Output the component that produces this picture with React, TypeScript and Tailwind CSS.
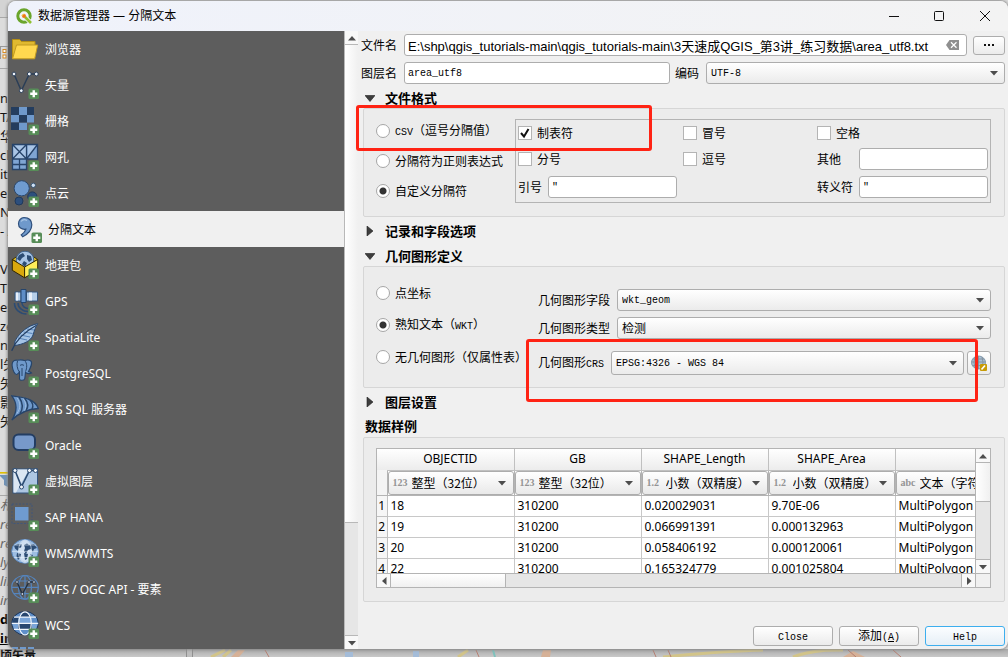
import type { ReactNode } from "react";
import clsx from "clsx";

const CJK = "font-['Noto_Sans','Noto_Sans_CJK_SC',sans-serif]";
const FORM = "font-['Noto_Sans_CJK_SC',sans-serif]";
const MONO = "font-['Liberation_Mono','Noto_Sans_CJK_SC',monospace] text-[10px]";

function Plus() {
  return (
    <g>
      <rect x="17.5" y="17.5" width="10.5" height="10.5" rx="1.5" fill="#578d58" />
      <path d="M22.75 19.3v7M19.2 22.75h7.1" stroke="#fff" strokeWidth="2.4" />
    </g>
  );
}

const folderIcon = (
  <>
    <path d="M1.5 23.5V4.5h7l2 2h13.5v4" fill="#e0b930" stroke="#b58f16" />
    <path d="M1.5 23.8L5.5 10h21.2l-3 13.8z" fill="#ffd84f" stroke="#c29a20" />
  </>
);

const vectorIcon = (
  <>
    <path d="M3 3l7.3 16.7L18.3 3h7" fill="none" stroke="#2b3e57" strokeWidth="1.5" />
    {[[3, 3], [10.3, 19.7], [18.3, 3], [25.3, 3]].map(([x, y]) => (
      <circle key={x} cx={x} cy={y} r="1.9" fill="#eef3fa" stroke="#2b3e57" />
    ))}
    <Plus />
  </>
);

const rasterIcon = (
  <>
    <path d="M8 0h8v8H8zM0 8h8v7.5H0zM16 8h7v7.5h-7zM8 15.5h8V23H8z" fill="#6f99cb" />
    <path d="M0 0h8v8H0zM16 0h7v8h-7zM8 8h8v7.5H8zM0 15.5h8V23H0z" fill="#243d5e" />
    <Plus />
  </>
);

const meshIcon = (
  <>
    <path d="M1.5 1.5h25v14.5H15.5v10.5h-14z" fill="#7fa5d3" />
    <path d="M1.5 1.5h14V16h-14z" fill="#a9c5e6" />
    <path d="M17 14L25.5 3v-1h-9z" fill="#a9c5e6" />
    <path
      d="M1.5 1.5h25v14.5h-25zM15.5 1.5v25h-14v-25M1.5 1.5l14 14.5M15.5 1.5L1.5 16M15.5 16l11-14.5M8.5 16v10.5M1.5 21.5h14"
      fill="none"
      stroke="#27446a"
      strokeWidth="1.3"
    />
    <Plus />
  </>
);

const cloudIcon = (
  <>
    <circle cx="10.7" cy="9.3" r="7.6" fill="#6f9bd0" stroke="#2b486e" />
    <circle cx="22.3" cy="6.3" r="2.2" fill="#cfe0f3" stroke="#35526f" />
    <circle cx="8" cy="22" r="4" fill="#2d4f7d" stroke="#20395c" />
    <circle cx="21.3" cy="17.5" r="4.6" fill="#2d4f7d" stroke="#20395c" />
    <Plus />
  </>
);

const commaIcon = (
  <>
    <path
      d="M10 2.5c5 0 7.8 3 7.8 7.3 0 5.2-4 9.4-9.1 12l-1.5-1.9c2.7-2 4.3-4 4.7-5.7-4.4.5-7.4-1.6-7.4-5.5 0-3.5 2.5-6.2 5.5-6.2z"
      fill="#6f99cb"
      stroke="#2f4f7c"
      strokeWidth="1.2"
    />
    <path d="M7 6.5c1.5-2 4-2.3 6-1" stroke="#a9c5e6" strokeWidth="1.2" fill="none" />
    <Plus />
  </>
);

const packageIcon = (
  <>
    <path d="M1.3 8.5L6 5.5h16l4.7 3-12.5 7z" fill="#e5c32a" stroke="#453500" />
    <circle cx="14" cy="9" r="8.8" fill="#a9c5e6" stroke="#41658f" />
    <path d="M8 4l4-2 2 3-3 2-2 3-3-2zM16 4l4 1 1 4-3 2-2-3zM13 10l3 2-2 4-3-3z" fill="#2c4c74" />
    <path d="M1.3 8.5l12.3 7.5v10.8L1.3 19.3z" fill="#d9a80d" stroke="#332700" />
    <path d="M13.6 16l13.1-7.5v10.8l-13.1 7.5z" fill="#ffee58" stroke="#332700" />
    <Plus />
  </>
);

const gpsIcon = (
  <>
    <path d="M4 5h6v9H4zM15.5 5h11v9h-11z" fill="#b6cfea" stroke="#34567f" />
    <path d="M5 5.5h2v8H5zM18 5.5h3v8h-3z" fill="#e8f0fa" />
    <path d="M10 2.5h5v13h-5z" fill="#5e8dc6" stroke="#24446c" />
    <path
      d="M11 16c0 3 3 5.5 6 5.5M7 16c0 5 5 8.5 10 8.5M3.5 16c0 7 6 11 12 11"
      fill="none"
      stroke="#2c4c74"
      strokeWidth="1.6"
    />
    <Plus />
  </>
);

const featherIcon = (
  <>
    <path d="M26.7.7C17 2.5 9 9 4 18l-.5 4.5C12 21.5 20 18 22 12c1.5-5 2.5-8 4.7-11.3z" fill="#a5c4e6" stroke="#294a74" />
    <path d="M7 15l9 2M9.5 12l9.5 2M12.5 9l9 1.5M16 6l7 1" stroke="#5582b8" />
    <path d="M25 2.5C15 8 5 17 .7 27.7" fill="none" stroke="#243f63" strokeWidth="1.4" />
    <Plus />
  </>
);

const elephantIcon = (
  <>
    <path
      d="M6 1.2C2 .8.8 3.5 1.2 7c.5 4 2.3 8.5 4.3 8.5 1.2 0 2-1.5 3-2.5v7c0 1.8 5 1.8 5.3-.5l.7-6c2.5 1.5 5 1 6 .5-1-1-2-1-3-1.5C19.5 9 21.5 3.5 19.8 2 18 .5 15.5 1 13.5 1.500 11 .5 9 .8 6 1.2z"
      fill="#6f99cb"
      stroke="#27456b"
      strokeWidth="1.1"
    />
    <path d="M6.5 2c-1 3-.5 8 2 11M13.5 1.5c3 2.5 2.5 8 1 11M9 6.5c1-1 3-1 4 0M11 9v8" fill="none" stroke="#27456b" />
    <Plus />
  </>
);

const sailIcon = (
  <>
    <path d="M.8.8C10 2 24 3 27.3 13.5 18 14 9 17 .8 25 6 17 7 9 .8.8z" fill="#6f99cb" stroke="#27456b" strokeWidth="1.3" />
    <path d="M8 2c4 6 4 12 1 16.5M13.5 3c4 5 4 9 1.5 12.5M19 5c3 3 3.5 6 2 9" fill="none" stroke="#27456b" strokeWidth="1.5" />
    <path d="M6 2.5c4 6 3.5 11 0 16M12 3.5c3 4 3.5 8 1.5 12" fill="none" stroke="#a0c0e4" />
    <Plus />
  </>
);

const oracleIcon = (
  <>
    <rect x="2.5" y="3.5" width="21.5" height="15.5" rx="5" fill="#7799ca" stroke="#233d62" strokeWidth="2" />
    <Plus />
  </>
);

const virtualIcon = (
  <>
    <rect x="2" y="2" width="24.5" height="24" fill="#adc6e2" stroke="#33547f" />
    <path d="M2.5 2.5H18L5 25.5H2.5z" fill="#dce7f3" />
    <path d="M4 3.5l6.5 16L18.5 3.5h6" fill="none" stroke="#2b4a70" strokeWidth="1.6" />
    {[[4, 3.5], [10.5, 20], [18.5, 3.5], [24.5, 3.5]].map(([x, y]) => (
      <circle key={x} cx={x} cy={y} r="2" fill="#f2f6fb" stroke="#2b4a70" />
    ))}
    <Plus />
  </>
);

const hanaIcon = (
  <>
    <rect x="1" y="1" width="20" height="19.5" fill="none" stroke="#41577a" strokeDasharray="2 1.5" />
    <rect x="4" y="4" width="13.5" height="13.5" fill="#6f9bd0" />
    <Plus />
  </>
);

const wmsIcon = (
  <>
    <ellipse cx="14" cy="12.3" rx="13.3" ry="11.9" fill="#9dbde2" stroke="#5b87bd" />
    <ellipse cx="14" cy="12.3" rx="6" ry="11" fill="#cfdff1" />
    <path
      d="M3 6.500l4-1.500 4 .5-1 3-2 .5-1 3-3-2.500zM13 6l3-1.500 2 1.500 5-1 3 4-3 1-1 3-2-3-3 1-2 4-2-3 1-3zM6 14l4 1-1 4-2 2-1.500-4zM13 14l4 1-1 5-2 1zM3 4l3-1M19 15l3 1-1 2"
      fill="#2c4c74"
    />
    <g fill="none" stroke="#eaf2fa" strokeWidth=".6">
      <ellipse cx="14" cy="12.3" rx="6.500" ry="11.5" />
      <path d="M1 12.3h26M3 6h22M3 18.600h22" />
    </g>
    <Plus />
  </>
);

const wfsIcon = (
  <>
    <g fill="none" stroke="#5584bd" strokeWidth="1.2">
      <ellipse cx="14" cy="12.3" rx="13.3" ry="11.8" />
      <ellipse cx="14" cy="12.3" rx="6.5" ry="11.8" />
      <path d="M14 .5v23.5M.7 12.3h26.6M3 6h22M3 18.6h22" />
    </g>
    <path d="M6 7l5.3 12L18 7h5" fill="none" stroke="#222f40" strokeWidth="1.3" />
    {[[6, 7], [11.3, 19], [18, 7], [23, 7]].map(([x, y]) => (
      <circle key={x} cx={x} cy={y} r="1.3" fill="#e9eff7" stroke="#222f40" strokeWidth=".8" />
    ))}
    <Plus />
  </>
);

const wcsIcon = (
  <>
    <ellipse cx="14" cy="12.3" rx="13.3" ry="11.8" fill="#5f8fc9" stroke="#1f3453" />
    <path d="M8 6C9 3 11 1 14 1s5 2 6 5zM1 12.3h7V18H3zM20 12.3h7L25 18h-5zM1 12h6l1-6H3z" fill="#27466f" />
    <path d="M8 12.3h12V18H8z" fill="#27466f" />
    <path d="M8 6h12v6H8zM1 12.300h6V18H3zM21 12.300h6L25 18h-4z" fill="#7aa5d8" />
    <path d="M3 6.2h22M.8 12.3h26.4M3 18.4h22" stroke="#eef4fb" strokeWidth="1.2" />
    <ellipse cx="14" cy="12.3" rx="6.3" ry="11.5" fill="none" stroke="#eef4fb" strokeWidth="1.2" />
    <Plus />
  </>
);

const sources: { name: string; icon: ReactNode }[] = [
  { name: "浏览器", icon: folderIcon },
  { name: "矢量", icon: vectorIcon },
  { name: "栅格", icon: rasterIcon },
  { name: "网孔", icon: meshIcon },
  { name: "点云", icon: cloudIcon },
  { name: "分隔文本", icon: commaIcon },
  { name: "地理包", icon: packageIcon },
  { name: "GPS", icon: gpsIcon },
  { name: "SpatiaLite", icon: featherIcon },
  { name: "PostgreSQL", icon: elephantIcon },
  { name: "MS SQL 服务器", icon: sailIcon },
  { name: "Oracle", icon: oracleIcon },
  { name: "虚拟图层", icon: virtualIcon },
  { name: "SAP HANA", icon: hanaIcon },
  { name: "WMS/WMTS", icon: wmsIcon },
  { name: "WFS / OGC API - 要素", icon: wfsIcon },
  { name: "WCS", icon: wcsIcon },
];

const columns = [
  { name: "OBJECTID", tag: "123", type: "整型（32位）" },
  { name: "GB", tag: "123", type: "整型（32位）" },
  { name: "SHAPE_Length", tag: "1.2", type: "小数（双精度）" },
  { name: "SHAPE_Area", tag: "1.2", type: "小数（双精度）" },
  { name: "", tag: "abc", type: "文本（字符串）" },
];

const rows = [
  ["18", "310200", "0.020029031", "9.70E-06", "MultiPolygon"],
  ["19", "310200", "0.066991391", "0.000132963", "MultiPolygon"],
  ["20", "310200", "0.058406192", "0.000120061", "MultiPolygon"],
  ["22", "310200", "0.165324779", "0.001025804", "MultiPolygon"],
];

// Latin runs are set in the half-width face beside full-width characters
function Mixed({ text }: { text: string }) {
  return (
    <>
      {text.split(/([ -~]+)/).map((part, i) =>
        i % 2 ? (
          <span key={i} className={MONO}>
            {part}
          </span>
        ) : (
          part
        ),
      )}
    </>
  );
}

function Arrow({ dir, className }: { dir: "up" | "down" | "left" | "right"; className?: string }) {
  const d = {
    up: "M0 6.5L4 2l4 4.5z",
    down: "M0 2h8L4 6.5z",
    left: "M6.5 0L2 4l4.5 4z",
    right: "M2 0l4.5 4L2 8z",
  }[dir];
  return (
    <svg viewBox="0 0 8 8" className={clsx("size-2 shrink-0 fill-[#4d4d4d]", className)} aria-hidden="true">
      <path d={d} />
    </svg>
  );
}

function TextField({ id, value = "", className }: { id: string; value?: string; className?: string }) {
  return (
    <input
      id={id}
      type="text"
      defaultValue={value}
      className={clsx(
        "h-[22px] min-w-0 rounded-[3px] border border-[#adadad] bg-white px-[3px] text-black outline-none",
        className ?? `flex-1 ${MONO}`,
      )}
    />
  );
}

function Combo({ id, value, tall, cjk }: { id: string; value: string; tall?: boolean; cjk?: boolean }) {
  return (
    <div className="relative min-w-0 flex-1">
      <select
        id={id}
        className={clsx(
          "block w-full appearance-none rounded-[3px] border border-[#adadad] bg-linear-to-b from-white to-[#ebebeb] pr-6 pl-1 text-black outline-none",
          tall ? "h-6" : "h-[22px]",
          cjk ? "text-[12px]" : `pt-px ${MONO}`,
        )}
      >
        <option>{value}</option>
      </select>
      <Arrow dir="down" className="pointer-events-none absolute top-1/2 right-[7px] -mt-1" />
    </div>
  );
}

function Radio({ name, label, checked }: { name: string; label: string; checked?: boolean }) {
  return (
    <label className="flex items-center gap-[5px] whitespace-nowrap">
      <input
        type="radio"
        name={name}
        defaultChecked={checked}
        className="size-[14px] shrink-0 appearance-none rounded-full border border-[#a6a6a6] bg-white checked:bg-[radial-gradient(circle,#333_3px,#fff_4px)]"
      />
      <span>
        <Mixed text={label} />
      </span>
    </label>
  );
}

function Check({ label, checked }: { label: string; checked?: boolean }) {
  return (
    <label className="flex items-center gap-[5px]">
      <span className="relative flex">
        <input
          type="checkbox"
          defaultChecked={checked}
          className="peer size-[14px] appearance-none border border-[#b4b4b4] bg-white"
        />
        <svg
          viewBox="0 0 14 14"
          className="pointer-events-none absolute inset-0 hidden peer-checked:block"
          aria-hidden="true"
        >
          <path d="M3 7l3 3.5L10.5 3" fill="none" stroke="#111" strokeWidth="2" />
        </svg>
      </span>
      {label}
    </label>
  );
}

function Heading({ title, open, className }: { title: string; open?: boolean; className?: string }) {
  return (
    <h2 className={clsx("pt-1 text-[13px] font-bold", className)}>
      <button type="button" aria-expanded={!!open} className="flex h-5 items-center font-bold">
        <svg viewBox="0 0 10 10" className="mr-[10px] ml-[2px] size-[10px]" aria-hidden="true">
          <path
            d={open ? "M0 2.5h10L5 8.5z" : "M2 0l6 5-6 5z"}
            fill="#3d3d3d"
            stroke="#222"
            strokeWidth=".6"
          />
        </svg>
        {title}
      </button>
    </h2>
  );
}

function PushButton({ children, primary }: { children: ReactNode; primary?: boolean }) {
  return (
    <button
      type="button"
      className={clsx(
        "h-5 w-20 rounded-[3px] border bg-linear-to-b leading-none",
        primary ? "border-[#3daeee] from-[#fbfdff] to-[#e6eff6]" : "border-[#adadad] from-white to-[#ebebeb]",
      )}
    >
      {children}
    </button>
  );
}

function TitleBar() {
  return (
    <header className="flex h-[30px] shrink-0 items-center bg-linear-to-r from-[#eff2fb] to-[#f3f3f3] pl-2">
      <svg viewBox="0 0 16 16" className="size-4" aria-hidden="true">
        <circle cx="8" cy="8" r="6.2" fill="none" stroke="#6aa52c" strokeWidth="3" />
        <path d="M9.5 9.5l5.5 5.5" stroke="#f1f3f9" strokeWidth="4.5" />
        <path d="M9 9l6 6" stroke="#8fc030" strokeWidth="2.6" />
        <circle cx="8" cy="8" r="2" fill="#ee7913" />
        <path d="M5.5 8L8 5.5" stroke="#f4d24f" />
      </svg>
      <h1 className="ml-[6px] text-[12px]">数据源管理器 — 分隔文本</h1>
      <div className="ml-auto flex">
        <button type="button" aria-label="最小化" className="flex h-[30px] w-[45px] items-center justify-center">
          <svg viewBox="0 0 10 10" className="size-[10px]">
            <path d="M0 5.5h10" stroke="#111" />
          </svg>
        </button>
        <button type="button" aria-label="最大化" className="flex h-[30px] w-[45px] items-center justify-center">
          <svg viewBox="0 0 10 10" className="size-[10px]">
            <rect x=".5" y=".5" width="9" height="9" rx="1" fill="none" stroke="#111" />
          </svg>
        </button>
        <button type="button" aria-label="关闭" className="flex h-[30px] w-[47px] items-center justify-center">
          <svg viewBox="0 0 10 10" className="size-[10px]">
            <path d="M0 0l10 10M10 0L0 10" stroke="#111" />
          </svg>
        </button>
      </div>
    </header>
  );
}

function Sidebar() {
  return (
    <nav className="w-[336px] shrink-0 overflow-hidden bg-[#5d5d5d] text-white">
      <ul>
        {sources.map((s, i) => (
          <li key={s.name}>
            <button
              type="button"
              className={clsx(
                "flex h-9 w-full items-center gap-[6px] text-left text-[12px]",
                i === 5 ? "bg-[#f0f0f0] pl-[6px] text-black" : "pl-[3px]",
              )}
            >
              <svg viewBox="0 0 28 28" className="size-7" aria-hidden="true">
                {s.icon}
              </svg>
              <span className="pt-0.5">{s.name}</span>
            </button>
          </li>
        ))}
      </ul>
      <svg viewBox="0 0 28 28" className="mt-1 ml-[3px] size-7" aria-hidden="true">
        <path d="M1 0h6v6H1zM9 0h6v6H9zM17 0h6v6h-6z" fill="#6f99cb" />
      </svg>
    </nav>
  );
}

function SidebarScroll() {
  return (
    <div className="flex w-[14px] shrink-0 flex-col border-l border-[#b8b8b8] bg-[#e6e6e6]">
      <div className="flex h-[14px] items-center justify-center border-b border-[#b8b8b8] bg-[#f8f8f8]">
        <Arrow dir="up" />
      </div>
      <div className="grow-[478] border-b border-[#b8b8b8] bg-linear-to-r from-white to-[#f0f0f0]" />
      <div className="grow-[112]" />
      <div className="flex h-[14px] items-center justify-center border-t border-[#b8b8b8] bg-[#f8f8f8]">
        <Arrow dir="down" />
      </div>
    </div>
  );
}

function FileFormat() {
  return (
    <section className="relative ml-[5px] flex rounded-[2px] border border-[#d6d6d6] bg-[#ececec] pt-[10px] pr-[13px] pb-[13px] pl-3">
      <div className="flex w-[139px] shrink-0 flex-col">
        <div className="flex h-6 items-center">
          <Radio name="format" label="CSV（逗号分隔值）" />
        </div>
        <div className="flex h-9 items-center">
          <Radio name="format" label="分隔符为正则表达式" />
        </div>
        <div className="flex h-6 items-center">
          <Radio name="format" label="自定义分隔符" checked />
        </div>
      </div>
      <div className="grid min-w-0 flex-1 grid-cols-[165fr_134fr_171fr] grid-rows-[26px_26px_30px] items-center border border-[#b4b4b4] px-[2px]">
        <Check label="制表符" checked />
        <Check label="冒号" />
        <Check label="空格" />
        <Check label="分号" />
        <Check label="逗号" />
        <div className="flex min-w-0 items-center">
          <label htmlFor="other" className="w-[42px] shrink-0">其他</label>
          <TextField id="other" />
        </div>
        <div className="col-span-2 flex min-w-0 items-center">
          <label htmlFor="quote" className="w-[30px] shrink-0">引号</label>
          <TextField id="quote" value={'"'} className={`w-[129px] ${MONO}`} />
        </div>
        <div className="flex min-w-0 items-center">
          <label htmlFor="escape" className="w-[42px] shrink-0">转义符</label>
          <TextField id="escape" value={'"'} />
        </div>
      </div>
      <div className="pointer-events-none absolute top-[-4px] left-[-8px] h-[46px] w-[296px] rounded-[3px] border-3 border-[#ff2314]" />
    </section>
  );
}

function Geometry() {
  return (
    <section className="relative ml-[5px] flex rounded-[2px] border border-[#d6d6d6] bg-[#ececec] pt-[10px] pr-[13px] pb-3 pl-3">
      <div className="grid h-24 w-[162px] shrink-0 grid-rows-3">
        <Radio name="geometry" label="点坐标" />
        <Radio name="geometry" label="熟知文本（WKT）" checked />
        <Radio name="geometry" label="无几何图形（仅属性表）" />
      </div>
      <div className="flex min-w-0 flex-1 flex-col pt-3">
        <div className="flex items-center">
          <label htmlFor="geom-field" className="w-[79px]">几何图形字段</label>
          <Combo id="geom-field" value="wkt_geom" />
        </div>
        <div className="mt-[6px] flex items-center">
          <label htmlFor="geom-type" className="w-[79px]">几何图形类型</label>
          <Combo id="geom-type" value="检测" cjk />
        </div>
        <div className="mt-3 flex items-center">
          <label htmlFor="geom-crs" className="w-[73px]">
            <Mixed text="几何图形CRS" />
          </label>
          <Combo id="geom-crs" value="EPSG:4326 - WGS 84" tall />
          <button
            type="button"
            aria-label="选择CRS"
            className="ml-[3px] flex h-6 w-6 items-center justify-center rounded-[3px] border border-[#adadad] bg-linear-to-b from-white to-[#ebebeb]"
          >
            <svg viewBox="0 0 16 16" className="size-4" aria-hidden="true">
              <ellipse cx="7.5" cy="7.5" rx="7" ry="6.5" fill="#a9c0d4" stroke="#8399ab" />
              <path
                d="M.5 7h14M2 4h11M2 10.5h11M7.5 1v13M4 2q-2 5 0 11M11 2q2 5 0 11"
                fill="none"
                stroke="#7d8c98"
                strokeWidth=".8"
              />
              <rect x="9" y="9" width="7" height="7" rx="1" fill="#c79b06" />
              <path d="M10.5 14.5l3.5-4" stroke="#fff" strokeWidth="1.6" />
            </svg>
          </button>
        </div>
      </div>
      <div className="pointer-events-none absolute top-[72px] right-[26px] left-[162px] h-[63px] rounded-[3px] border-3 border-[#ff2314]" />
    </section>
  );
}

function SampleTable() {
  return (
    <section className="ml-[5px] rounded-[2px] border border-[#d6d6d6] bg-[#ececec] pt-[10px] pr-[13px] pb-[13px] pl-3">
      <div className="flex h-[140px] border border-[#b4b4b4] bg-white">
        <div className="flex min-w-0 flex-1 flex-col">
          <div className="min-h-0 flex-1 overflow-hidden">
            <table className={`w-[645px] table-fixed border-collapse text-[12px] ${CJK}`}>
              <colgroup>
                <col className="w-[10px]" />
                {columns.map((c, i) => (
                  <col key={i} className="w-[127px]" />
                ))}
              </colgroup>
              <thead>
                <tr className="h-[21px] bg-linear-to-b from-white to-[#ececec]">
                  <th className="p-0" />
                  {columns.map((c, i) => (
                    <th key={i} scope="col" className="border-r border-b border-[#c0c0c0] p-0 leading-5 font-normal">
                      {c.name}
                    </th>
                  ))}
                </tr>
              </thead>
              <tbody>
                <tr className="h-[25px]">
                  <th className="border-r border-b border-[#b4b4b4] bg-[#f4f4f4] p-0" />
                  {columns.map((c, i) => (
                    <td key={i} className="border-r border-b border-[#b4b4b4] p-0">
                      <div className="relative flex h-6 items-center rounded-[3px] border border-[#adadad] bg-linear-to-b from-white to-[#e9e9e9] pl-1">
                        <span className="w-[19px] shrink-0 font-['Liberation_Serif',serif] text-[10px] font-bold text-[#949494]">
                          {c.tag}
                        </span>
                        <select
                          aria-label={`类型 ${i + 1}`}
                          className={`h-[22px] w-full min-w-0 appearance-none bg-transparent text-[12px] outline-none ${FORM}`}
                        >
                          <option>{c.type}</option>
                        </select>
                        <Arrow dir="down" className="pointer-events-none absolute top-[7px] right-[7px]" />
                      </div>
                    </td>
                  ))}
                </tr>
                {rows.map((row, r) => (
                  <tr key={r} className="h-[21px]">
                    <th scope="row" className="border-r border-b border-[#c0c0c0] bg-[#f6f6f6] p-0 text-center leading-5 font-normal">
                      {r + 1}
                    </th>
                    {row.map((cell, i) => (
                      <td key={i} className="border-r border-b border-[#c8c8c8] p-0 pl-[3px] leading-5">
                        {cell}
                      </td>
                    ))}
                  </tr>
                ))}
              </tbody>
            </table>
          </div>
          <div className="flex h-[14px] shrink-0 border-t border-[#b4b4b4] bg-[#e6e6e6]">
            <div className="flex w-[14px] items-center justify-center border-r border-[#b4b4b4] bg-[#f8f8f8]">
              <Arrow dir="left" />
            </div>
            <div className="grow-[115] border-r border-[#b4b4b4] bg-linear-to-b from-white to-[#f0f0f0]" />
            <div className="grow-[457]" />
            <div className="flex w-[14px] items-center justify-center border-l border-[#b4b4b4] bg-[#f8f8f8]">
              <Arrow dir="right" />
            </div>
          </div>
        </div>
        <div className="flex w-[15px] shrink-0 flex-col border-l border-[#b4b4b4] bg-[#e6e6e6]">
          <div className="flex h-[14px] items-center justify-center border-b border-[#b4b4b4] bg-[#f8f8f8]">
            <Arrow dir="up" />
          </div>
          <div className="grow-[39] border-b border-[#b4b4b4] bg-linear-to-r from-white to-[#f0f0f0]" />
          <div className="grow-[58]" />
          <div className="flex h-[14px] items-center justify-center border-t border-[#b4b4b4] bg-[#f8f8f8]">
            <Arrow dir="down" />
          </div>
          <div className="h-[14px] border-t border-[#b4b4b4] bg-[#f0f0f0]" />
        </div>
      </div>
    </section>
  );
}

// The main window behind the dialog, of which only a left and a bottom sliver show
function Backdrop() {
  const layers = ["no", "TA", "华", "ck", "ite", "eS", "N", "- /", "", "VI", "Ti", "es", "ze", "nS", "l矢", "矢", "影", "矢"];
  const browser = ["札", "re", "re", "ly", "lin", "in"];
  return (
    <div
      aria-hidden="true"
      className={`absolute inset-0 overflow-hidden bg-[#dcdcdc] text-[13px] leading-[19px] text-[#111] ${CJK}`}
    >
      <div className="h-[18px] w-2 border-b border-[#a8a8a8] bg-[#d4d4d4]" />
      <div className="h-[51px] w-2 border-b border-[#a8a8a8] pt-7">
        <svg viewBox="0 0 8 14" className="h-[14px] w-2">
          <path d="M0 .5h8M.5 0v13" stroke="#999" />
          <rect x="3" y="3.5" width="3" height="3" fill="#fff" stroke="#d98a1e" />
          <rect x="3" y="9" width="3" height="3" fill="#fff" stroke="#d98a1e" />
        </svg>
      </div>
      <div className="flex flex-col pt-5">
        {layers.map((t, i) => (
          <span key={i} className="h-[19px]">
            {t}
          </span>
        ))}
      </div>
      <div className="h-[65px] border-b border-[#a8a8a8] pt-[41px]">
        <svg viewBox="0 0 8 20" className="h-5 w-2">
          <path d="M0 .8h8" stroke="#e0c000" strokeWidth="1.6" />
          <path d="M0 3h8v12l-4-2V8L0 4z" fill="#6f93b8" />
        </svg>
      </div>
      <div className="flex flex-col text-[#666] italic">
        {browser.map((t, i) => (
          <span key={i} className="h-[19px]">
            {t}
          </span>
        ))}
        <span className="h-[19px] font-bold text-black not-italic">d</span>
        <span className="h-[19px] font-bold text-black not-italic underline">in</span>
      </div>
      <div className="absolute inset-x-0 bottom-0 flex h-2 overflow-hidden bg-linear-to-b from-[#a9a9a9] to-[#c9c9c9]">
        <span className="w-[186px] shrink-0 text-[12px] leading-[14px] font-bold whitespace-nowrap">顷矢量</span>
        <div className="w-[7px] shrink-0 border-x border-[#8f8f8f] bg-[#bdbdbd]" />
        <svg viewBox="0 0 815 8" preserveAspectRatio="none" className="h-2 min-w-0 flex-1">
          <path
            d="M18 8l14-7M30 8l8-7M265 8l10-7M470 8q60-6 100-7M600 8q20-8 50-7"
            stroke="#d2c489"
            strokeWidth="3"
            fill="none"
          />
          <path d="M38 8l7-7h7l-6 7zM348 8l2-7h8l-1 7zM650 8l10-6 12 6z" fill="#d6b197" />
          <path d="M152 3h8v5h-8zM220 8V2h6v6z" fill="#a4bcd8" />
          <path d="M72 1l4 7M283 1l3 7M460 1l3 7M475 1l3 7M655 1l8 7M700 1l8 7" stroke="#b67f72" />
          <path d="M300 1l2 7" stroke="#7ec2bd" strokeWidth="2" />
        </svg>
      </div>
    </div>
  );
}

export default function App() {
  return (
    <div className={`relative h-screen min-h-[657px] overflow-hidden pt-px pb-2 pl-2 text-[12px] leading-4 text-black ${FORM}`}>
      <Backdrop />
      <main
        className={`relative flex h-full flex-col overflow-hidden rounded-lg bg-[#f0f0f0] shadow-[0_0_3px_1px_#8a8a8a] ${CJK}`}
      >
        <TitleBar />
        <div className="flex min-h-0 flex-1">
          <Sidebar />
          <SidebarScroll />
          <form className={`flex min-w-0 flex-1 flex-col pt-[3px] pr-[3px] pb-[3px] ${FORM}`}>
            <div className="flex items-center pl-[3px]">
              <label htmlFor="file" className="w-[43px]">文件名</label>
              <div className="relative flex min-w-0 flex-1">
                <TextField
                  id="file"
                  value="E:\shp\qgis_tutorials-main\qgis_tutorials-main\3天速成QGIS_第3讲_练习数据\area_utf8.txt"
                  className="w-full pr-6 font-['Liberation_Sans','Noto_Sans_CJK_SC',sans-serif] text-[13px]"
                />
                <button type="button" aria-label="清除" className="absolute top-[6px] right-2">
                  <svg viewBox="0 0 13 10" className="h-[10px] w-[13px]">
                    <path d="M0 5l3.5-5H13v10H3.5z" fill="#8f8f8f" />
                    <path d="M5 2.3l5.5 5.4M10.5 2.3L5 7.7" stroke="#fff" strokeWidth="1.2" />
                  </svg>
                </button>
              </div>
              <button
                type="button"
                aria-label="浏览"
                className="ml-[6px] flex h-[19px] w-8 items-center justify-center rounded-[3px] border border-[#adadad] bg-linear-to-b from-white to-[#ebebeb]"
              >
                <svg viewBox="0 0 12 2" className="h-[2px] w-3">
                  <path d="M1 0h2v2H1zM5 0h2v2H5zM9 0h2v2H9z" fill="#111" />
                </svg>
              </button>
            </div>
            <div className="mt-[6px] flex items-center pl-[3px]">
              <label htmlFor="layer" className="w-[43px]">图层名</label>
              <TextField id="layer" value="area_utf8" className={`flex-[258] ${MONO}`} />
              <label htmlFor="encoding" className="ml-[5px] w-[31px]">编码</label>
              <div className="flex min-w-0 flex-[299]">
                <Combo id="encoding" value="UTF-8" />
              </div>
            </div>

            <Heading title="文件格式" open className="ml-[5px] h-6" />
            <FileFormat />
            <Heading title="记录和字段选项" className="ml-[5px] h-[25px]" />
            <Heading title="几何图形定义" open className="ml-[5px] h-6" />
            <Geometry />
            <Heading title="图层设置" className="ml-[5px] h-6" />
            <h2 className="ml-[7px] h-[25px] pt-1 text-[13px] leading-5 font-bold">数据样例</h2>
            <SampleTable />

            <div className="mt-auto flex justify-end gap-[6px]">
              <PushButton>
                <Mixed text="Close" />
              </PushButton>
              <PushButton>
                添加
                <span className={MONO}>
                  (<u>A</u>)
                </span>
              </PushButton>
              <PushButton primary>
                <Mixed text="Help" />
              </PushButton>
            </div>
          </form>
        </div>
      </main>
    </div>
  );
}
